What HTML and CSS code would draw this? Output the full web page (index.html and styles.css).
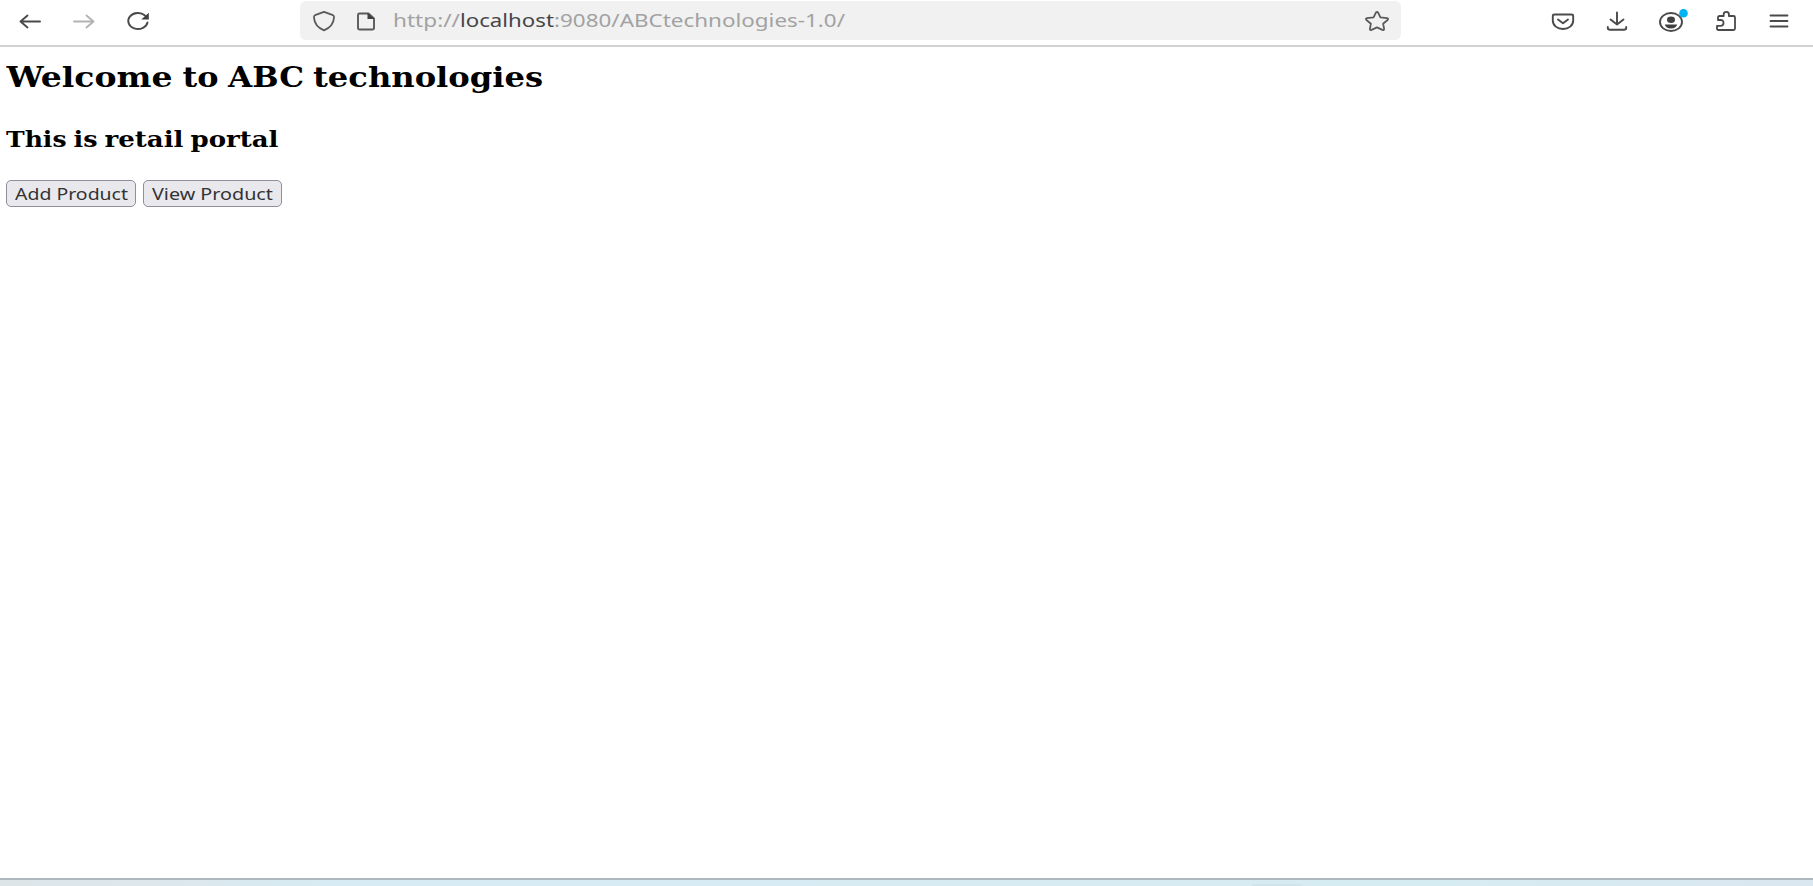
FILE: index.html
```html
<!DOCTYPE html>
<html lang="en">
<head>
<meta charset="utf-8">
<title>ABC technologies</title>
<link rel="stylesheet" href="styles.css">
</head>
<body>
<header class="toolbar">
  <nav class="nav">
    <svg class="icon" width="24" height="20" viewBox="0 0 24 20"><path d="M22 10.500H2.500M9.500 4.500L2.500 10.500l7 6"/></svg>
    <svg class="icon faded" width="24" height="20" viewBox="0 0 24 20"><path d="M2 10.500h19.500M14.500 4.500l7 6-7 6"/></svg>
    <svg class="icon" width="24" height="20" viewBox="0 0 24 20"><path d="M19 4.500A9.700 8 0 1 0 21.500 11.500"/><path class="solid" d="M22.800 1.800v6.700h-7.500z"/></svg>
  </nav>
  <div class="address">
    <svg class="icon thin" width="24" height="22" viewBox="0 0 24 22"><path d="M12 1.800L21 5.200Q22.300 5.800 22 7.500Q21.500 16.500 12 20.300Q2.500 16.500 2 7.500Q1.700 5.800 3 5.200z"/></svg>
    <svg class="icon page" width="20" height="20" viewBox="0 0 20 20"><path d="M3.500 2.500h9L18 7.500v9.500q0 1.500-1.700 1.500H3.700Q2 18.500 2 17v-13Q2 2.500 3.500 2.500z"/><path class="solid" d="M11.500 2L18.500 8h-7z"/></svg>
    <svg class="url" width="454" height="38" viewBox="0 0 454 38">
      <text x="1" y="25" textLength="67" lengthAdjust="spacingAndGlyphs">http://</text>
      <text class="host" x="68" y="25" textLength="94" lengthAdjust="spacingAndGlyphs">localhost</text>
      <text x="162" y="25" textLength="291" lengthAdjust="spacingAndGlyphs">:9080/ABCtechnologies-1.0/</text>
    </svg>
    <svg class="icon thin star" width="26" height="22" viewBox="0 0 26 22"><path d="M11.900 2.600q1.100-1.500 2.200 0l2.300 4.700 6.600.8q1.800.5.600 1.900l-4.500 3.700 1 5.200q0 1.500-1.700 1l-5.400-2.500-5.400 2.500q-1.700.5-1.700-1l1-5.200-4.500-3.700q-1.200-1.400.6-1.900l6.600-.8z"/></svg>
  </div>
  <div class="actions">
    <svg class="icon" width="24" height="22" viewBox="0 0 24 22"><path d="M3.500 4.500h17q1.700 0 1.700 1.500v4.500c0 5-4.500 8.500-10.200 8.500S1.800 15.500 1.800 10.500V6Q1.800 4.500 3.500 4.500z"/><path d="M7 9.500l5 3.700 5-3.700"/></svg>
    <svg class="icon download" width="22" height="22" viewBox="0 0 22 22"><path d="M11 2.500v12M4.500 9.500l6.500 5L17.500 9.500M1.800 17v1q0 1.700 2.300 1.700h13.800q2.300 0 2.300-1.700v-1"/></svg>
    <svg class="icon account" width="32" height="24" viewBox="0 0 32 24"><ellipse cx="13" cy="13" rx="11" ry="9"/><ellipse class="solid" cx="13" cy="10.700" rx="4" ry="3.200"/><path class="solid" d="M6.800 15.500h12.400c-.7 2.700-3 4-6.200 4s-5.500-1.300-6.200-4z"/><circle class="dot" cx="25.500" cy="4.200" r="4.300"/></svg>
    <svg class="icon thin puzzle" width="22" height="22" viewBox="0 0 22 22"><path d="M3 10V7.500q0-1.500 1.500-1.500H8.700V4.200q0-2.400 2.600-2.400t2.600 2.400V6H18.500Q20 6 20 7.500V18.500Q20 20 18.500 20H3.500Q2 20 2 18.500V15.800h3.500q3 0 3-2.900T5.500 10H3"/></svg>
    <svg class="icon thin menu" width="20" height="22" viewBox="0 0 20 22"><path d="M1.500 5.500h17M1.500 11h17M1.500 16.500h17"/></svg>
  </div>
</header>
<main class="content">
  <h2 class="title"><svg width="540" height="40" viewBox="0 0 540 40">
    <text x="0.500" y="29" textLength="166" lengthAdjust="spacingAndGlyphs">Welcome</text>
    <text x="176.500" y="29" textLength="36" lengthAdjust="spacingAndGlyphs">to</text>
    <text x="222" y="29" textLength="76" lengthAdjust="spacingAndGlyphs">ABC</text>
    <text x="307" y="29" textLength="230" lengthAdjust="spacingAndGlyphs">technologies</text>
  </svg></h2>
  <h3 class="subtitle"><svg width="280" height="32" viewBox="0 0 280 32">
    <text x="0" y="22" textLength="60.500" lengthAdjust="spacingAndGlyphs">This</text>
    <text x="67.500" y="22" textLength="24" lengthAdjust="spacingAndGlyphs">is</text>
    <text x="98.500" y="22" textLength="79" lengthAdjust="spacingAndGlyphs">retail</text>
    <text x="184.500" y="22" textLength="88" lengthAdjust="spacingAndGlyphs">portal</text>
  </svg></h3>
  <div class="buttons">
    <button class="btn add"><svg width="113" height="25" viewBox="0 0 113 25"><text x="0" y="19" textLength="113" lengthAdjust="spacingAndGlyphs">Add Product</text></svg></button>
    <button class="btn view"><svg width="122" height="25" viewBox="0 0 122 25"><text x="0" y="19" textLength="121" lengthAdjust="spacingAndGlyphs">View Product</text></svg></button>
  </div>
</main>
<footer class="desktop-edge"><span class="shade"></span></footer>
</body>
</html>
```
FILE: styles.css
```css
* { box-sizing: border-box; }
body {
  margin: 0;
  height: 886px;
  display: flex;
  flex-direction: column;
  background: #fff;
  overflow: hidden;
}
svg { display: block; flex: none; }
.toolbar {
  height: 47px;
  flex: none;
  display: flex;
  align-items: flex-start;
  padding-top: 1px;
  border-bottom: 2px solid #d2d2d2;
}
.nav {
  width: 300px;
  height: 39px;
  flex: none;
  display: flex;
  align-items: center;
  gap: 30px;
  padding-left: 18px;
}
.icon {
  fill: none;
  stroke: #4a4a4a;
  stroke-width: 1.900;
  stroke-linecap: round;
  stroke-linejoin: round;
}
.thin { stroke-width: 1.800; }
.faded { stroke: #b3b3b3; }
.icon .solid { fill: #404040; stroke: none; }
.icon .dot { fill: #00b3f4; stroke: none; }
.address {
  width: 1101px;
  height: 39px;
  flex: none;
  display: flex;
  align-items: center;
  padding: 0 11px 0 12px;
  border-radius: 6px;
  background: #f1f1f1;
}
.address .icon { stroke: #5a5a5a; }
.page { margin-left: 20px; }
.url {
  margin-left: 16px;
  font: 18px "Noto Sans", sans-serif;
  fill: #a2a2a2;
}
.url .host { fill: #464646; }
.star { margin-left: auto; }
.actions {
  height: 39px;
  flex: 1;
  display: flex;
  align-items: center;
  padding-left: 150px;
}
.download { margin-left: 31px; }
.account { margin-left: 30px; }
.puzzle { margin-left: 25px; }
.menu { margin-left: 32px; }
.content { flex: 1; padding: 11px 0 0 6px; }
.title, .subtitle { margin: 0; fill: #000; }
.title { height: 67px; font: bold 28px "DejaVu Serif Condensed", "DejaVu Serif", serif; }
.subtitle { height: 55px; font: bold 22.500px "DejaVu Serif Condensed", "DejaVu Serif", serif; }
.buttons { display: flex; gap: 7px; }
.btn {
  height: 27px;
  padding: 0 0 0 8px;
  border: 1.500px solid #8f8f9d;
  border-radius: 5px;
  background: #e9e9ed;
  fill: #333;
  font: 16px "Noto Sans", sans-serif;
}
.add { width: 130px; }
.view { width: 139px; }
.desktop-edge {
  height: 8px;
  flex: none;
  border-top: 2px solid #adb8be;
  background: linear-gradient(90deg, #dde5e8, #dce7ed 10%, #d6ebf3 18%, #d6ecf3 80%, #dae6f0);
}
.shade {
  display: block;
  width: 50px;
  height: 2px;
  margin: 4px 0 0 1252px;
  border-radius: 4px 4px 0 0;
  background: #d0e5eb;
}
```
